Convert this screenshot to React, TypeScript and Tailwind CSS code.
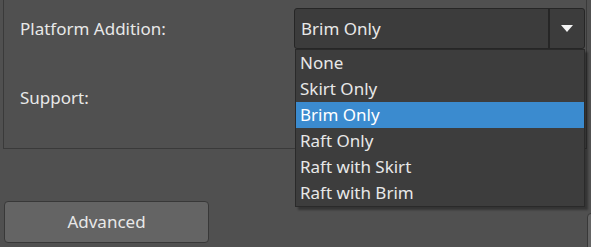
import React from "react";

const items = ["None", "Skirt Only", "Brim Only", "Raft Only", "Raft with Skirt", "Raft with Brim"];

export default function App() {
  return (
    <div
      className="relative w-[591px] h-[247px] overflow-hidden bg-[#505050] text-[#e8e8e8] text-[17px]"
      style={{ fontFamily: '"Noto Sans", "Open Sans", sans-serif' }}
    >
      {/* group box */}
      <div className="ml-[3px] w-[584px] h-[149px] border-x border-b border-[#3a3a3a] flex flex-col">
        <div className="flex items-center h-[41px] mt-[8px]">
          <div className="pl-[16px] w-[290px] shrink-0 leading-none">Platform Addition:</div>
          <div className="flex h-[41px] w-[291px] shrink-0 rounded-[3px] border border-[#262626] bg-[#3c3c3c]">
            <div className="flex-1 flex items-center pl-[6px]">Brim Only</div>
            <div className="w-[36px] border-l-2 border-[#262626] flex items-center justify-center">
              <svg width="12" height="8" viewBox="0 0 12 8">
                <polygon points="0,0 12,0 6,7" fill="#f4f4f4" />
              </svg>
            </div>
          </div>
        </div>
        <div className="pl-[16px] mt-[40px] leading-none">Support:</div>
      </div>

      <div className="flex items-start mt-[52px]">
        <button className="shrink-0 ml-[4px] w-[205px] h-[42px] rounded-[4px] border border-[#383838] bg-[#646464] text-[#e8e8e8]">
          Advanced
        </button>
        <div className="shrink-0 ml-[378px] mt-[12px] w-[20px] h-[40px] rounded-[4px] border border-[#383838] bg-[#646464]" />
      </div>

      {/* popup */}
      <div className="absolute left-[295px] top-[49px] w-[290px] h-[158px] bg-[#3d3d3d] border border-[#2a2a2a] shadow-[3px_3px_2px_rgba(0,0,0,0.35)] flex flex-col">
        {items.map((it) => (
          <div
            key={it}
            className={
              "h-[26px] flex items-center pl-[4px] " + (it === "Brim Only" ? "bg-[#3b8bcf] text-white" : "")
            }
          >
            {it}
          </div>
        ))}
      </div>
    </div>
  );
}
